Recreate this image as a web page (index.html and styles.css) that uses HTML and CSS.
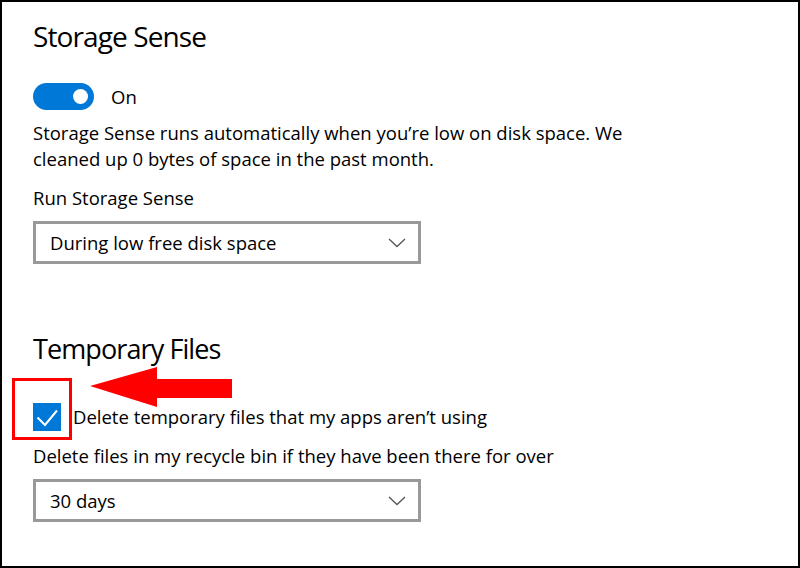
FILE: index.html
```html
<!DOCTYPE html>
<html>
<head>
<meta charset="utf-8">
<link rel="stylesheet" href="styles.css">
</head>
<body>
<div class="frame">
  <h1 class="heading">Storage Sense</h1>
  <div class="toggle-row">
    <span class="toggle"><span class="knob"></span></span>
    <span class="toggle-label">On</span>
  </div>
  <p class="para">Storage Sense runs automatically when you’re low on disk space. We<br>cleaned up 0 bytes of space in the past month.</p>
  <div class="label">Run Storage Sense</div>
  <div class="select">
    <span>During low free disk space</span>
    <svg class="chev" width="18" height="10" viewBox="0 0 18 10"><polyline points="1,1 9,8.5 17,1" fill="none" stroke="#555" stroke-width="1.3"/></svg>
  </div>

  <h2 class="heading heading2">Temporary Files</h2>
  <div class="check-row">
    <span class="checkbox">
      <svg width="28" height="28" viewBox="0 0 28 28"><polyline points="4.5,14.5 12,22 24,7.5" fill="none" stroke="#fff" stroke-width="2"/></svg>
    </span>
    <span class="check-label">Delete temporary files that my apps aren’t using</span>
  </div>
  <div class="label label2">Delete files in my recycle bin if they have been there for over</div>
  <div class="select">
    <span>30 days</span>
    <svg class="chev" width="18" height="10" viewBox="0 0 18 10"><polyline points="1,1 9,8.5 17,1" fill="none" stroke="#555" stroke-width="1.3"/></svg>
  </div>

  <div class="highlight"></div>
  <svg class="arrow" width="150" height="46" viewBox="88 364 150 46"><polygon points="90,386 157,367 157,379 232,379 232,398 157,398 157,407" fill="#f00"/></svg>
</div>
</body>
</html>
```

FILE: styles.css
```css
html, body {
  margin: 0;
  padding: 0;
  background: #fff;
}
.frame {
  position: relative;
  width: 800px;
  height: 568px;
  box-sizing: border-box;
  border: 2px solid #000;
  padding: 14px 0 0 31px;
  font-family: "Open Sans", "Noto Sans", sans-serif;
  color: #000;
  font-size: 18.5px;
}
.heading {
  margin: 0;
  font-size: 28px;
  font-weight: 400;
  line-height: 40px;
  letter-spacing: -0.9px;
}
.heading2 {
  margin-top: 65px;
  font-size: 27px;
}
.toggle-row {
  margin-top: 27px;
  display: flex;
  align-items: center;
  height: 27px;
}
.toggle {
  width: 61px;
  height: 27px;
  border-radius: 14px;
  background: #0078d7;
  position: relative;
  display: block;
}
.knob {
  position: absolute;
  width: 15px;
  height: 15px;
  border-radius: 50%;
  background: #fff;
  right: 6px;
  top: 6px;
}
.toggle-label {
  margin-left: 17px;
  line-height: 26px;
}
.para {
  margin: 10px 0 0;
  line-height: 26px;
  white-space: nowrap;
}
.label {
  margin-top: 13px;
  line-height: 26px;
  white-space: nowrap;
}
.label2 {
  margin-top: 12px;
}
.select {
  margin-top: 10px;
  width: 388px;
  height: 43px;
  box-sizing: border-box;
  border: 3px solid #999;
  display: flex;
  align-items: center;
  justify-content: space-between;
  padding: 0 12px 0 14px;
}
.chev {
  display: block;
}
.check-row {
  margin-top: 34px;
  display: flex;
  align-items: center;
  height: 28px;
}
.checkbox {
  width: 28px;
  height: 28px;
  background: #0078d7;
  display: block;
}
.checkbox svg {
  display: block;
}
.check-label {
  margin-left: 12px;
  line-height: 26px;
  white-space: nowrap;
}
.highlight {
  position: absolute;
  left: 10px;
  top: 376px;
  width: 60px;
  height: 62px;
  box-sizing: border-box;
  border: 3px solid #f00;
}
.arrow {
  position: absolute;
  left: 86px;
  top: 362px;
}
```
